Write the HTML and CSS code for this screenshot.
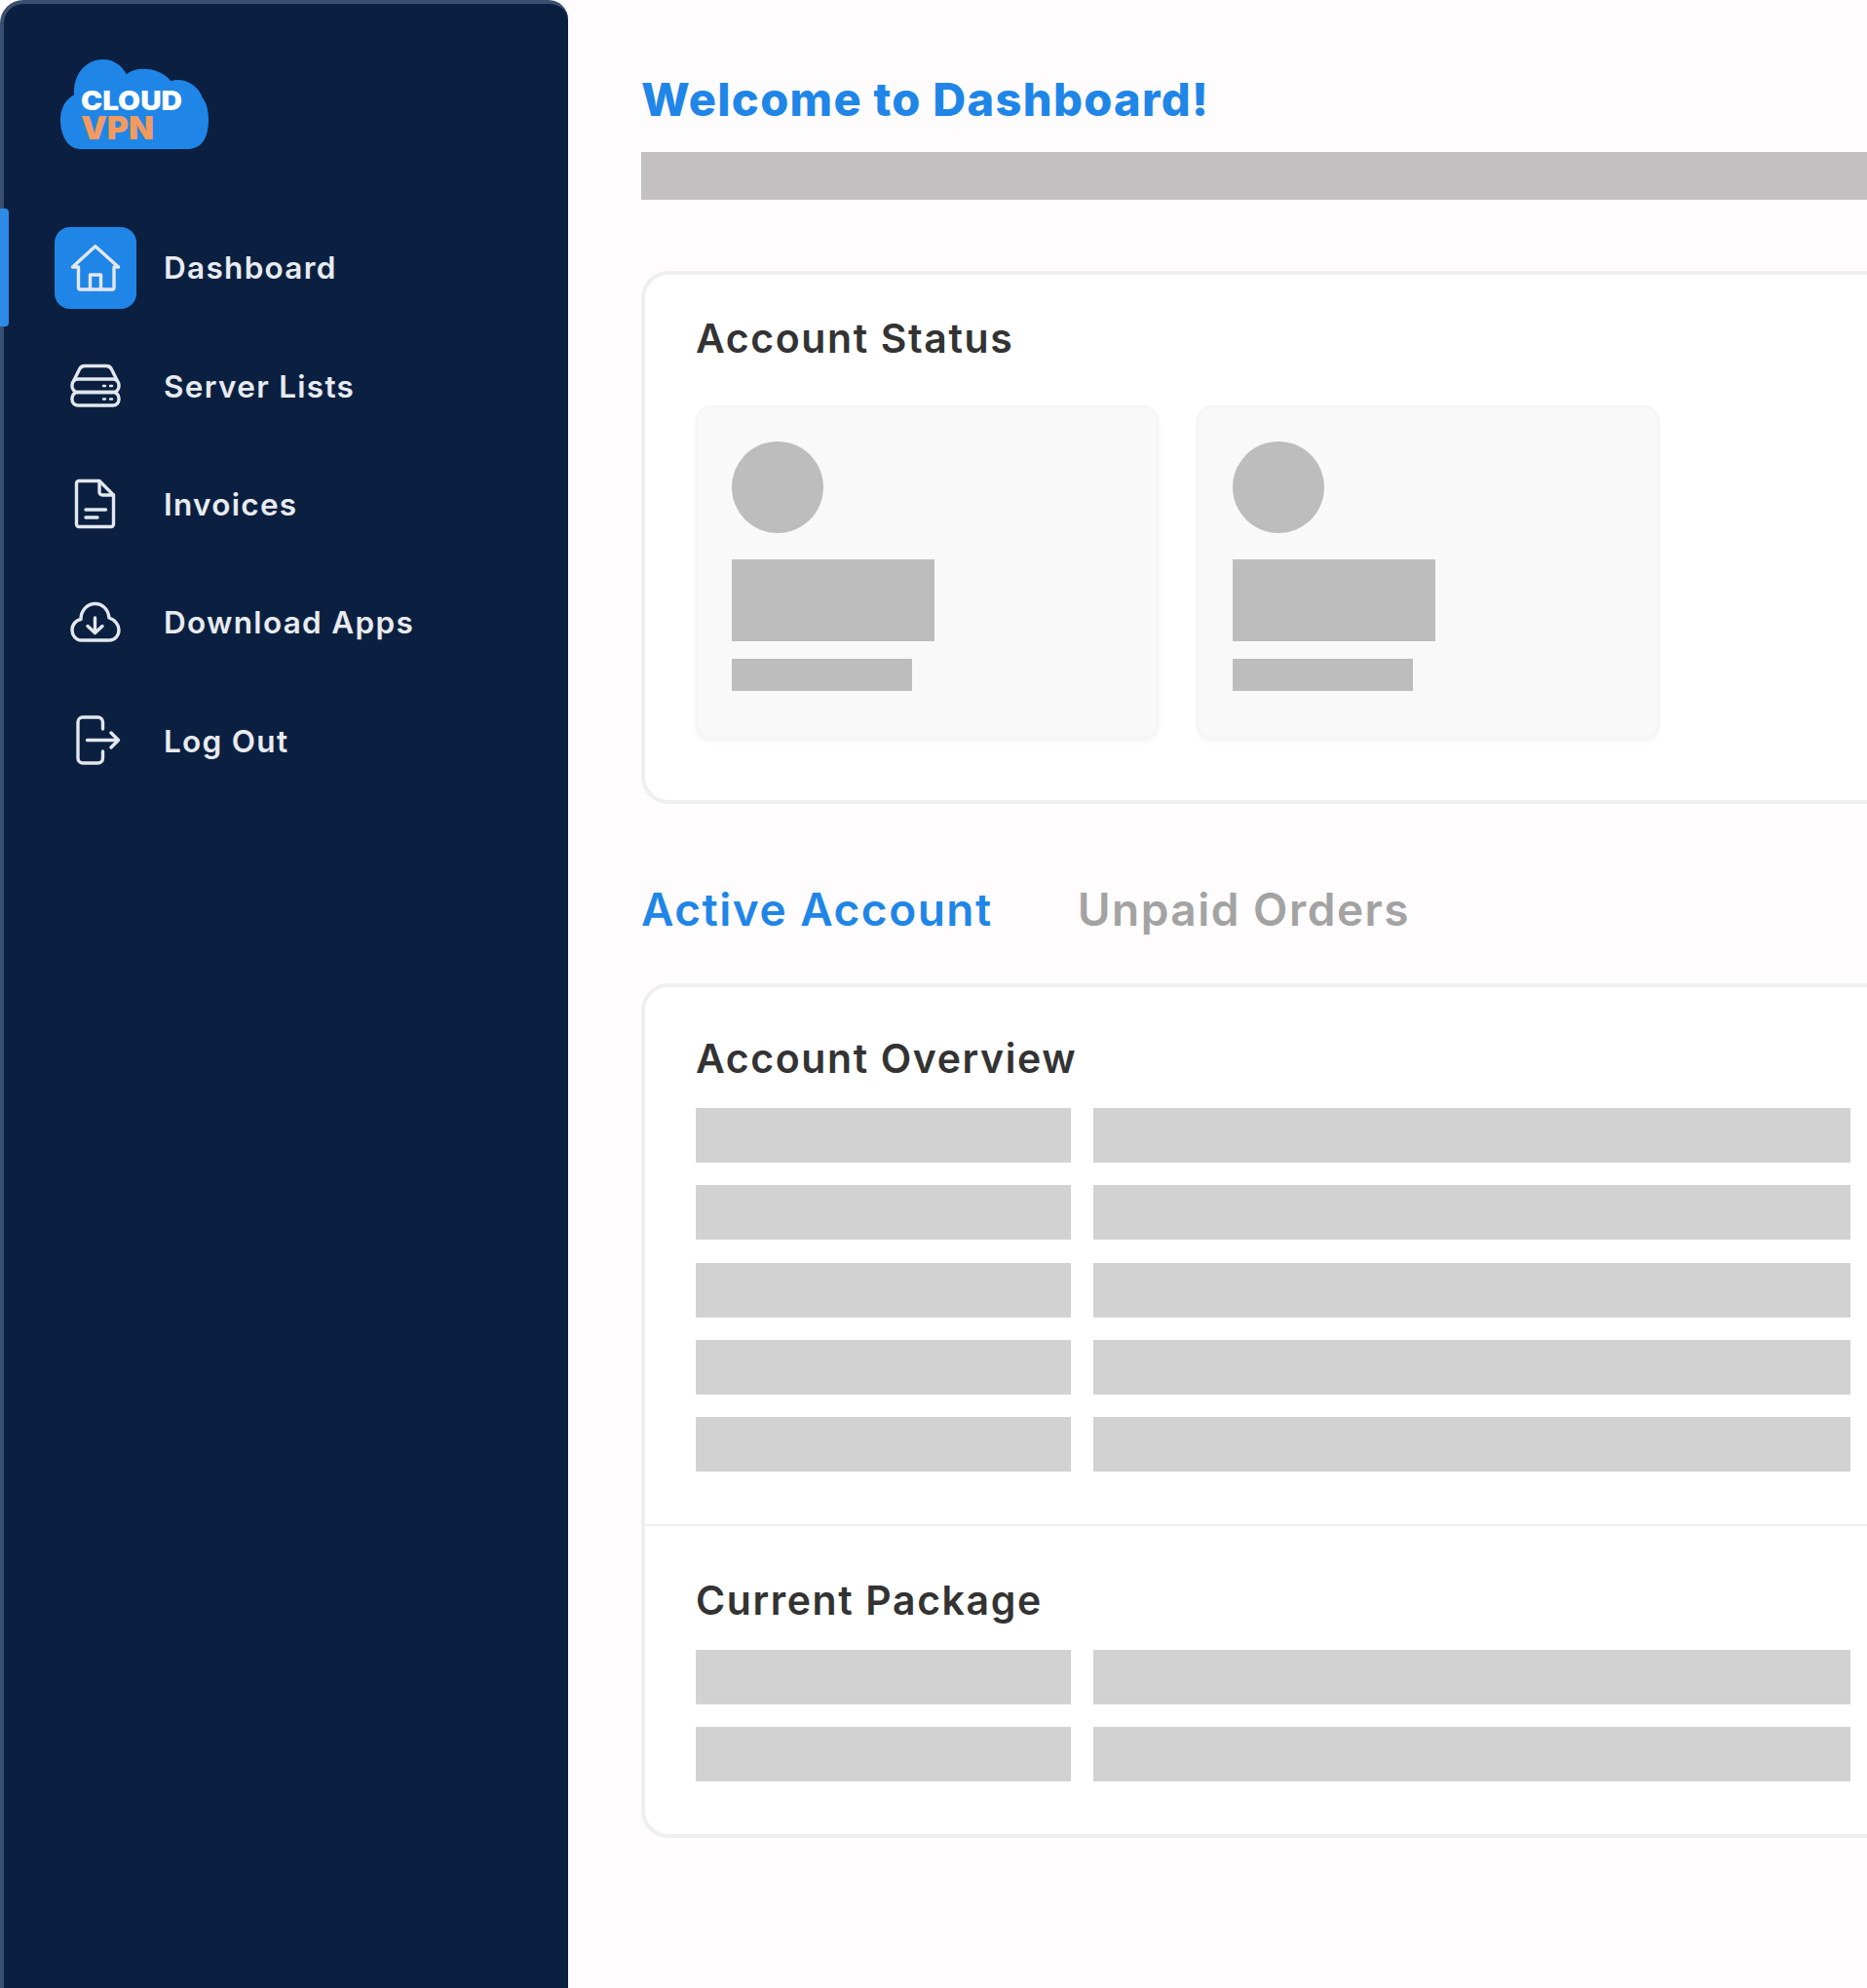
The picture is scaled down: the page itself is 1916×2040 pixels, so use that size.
FILE: index.html
```html
<!DOCTYPE html>
<html lang="en">
<head>
    <meta charset="UTF-8">
    <meta name="viewport" content="width=device-width, initial-scale=1.0">
    <title>Cloud VPN Dashboard</title>
    <link rel="stylesheet" href="styles.css">
</head>
<body>

    <aside class="sidebar">
        <div class="logo">
            <svg width="152" height="92" viewBox="0 0 152 92">
                <path fill="#1f86e8" transform="translate(-1 -1) scale(1.013 1.01)" d="M21 92C8 92 1 78 1 62C1 50 7 41 15 37C13 18 26 1 44 1C55 1 63 7 68 16C74 11 82 10 90 11C100 12 108 17 113 23C125 19 140 26 145 40C149 45 151 53 151 62C151 80 145 92 130 92Z"/>
                <text class="logo-cloud" x="21" y="52" textLength="104" lengthAdjust="spacingAndGlyphs">CLOUD</text>
                <text class="logo-vpn" x="21" y="82" textLength="75" lengthAdjust="spacingAndGlyphs">VPN</text>
            </svg>
        </div>

        <nav class="nav">
            <a class="nav-item active">
                <span class="nav-icon">
                    <svg width="52" height="52" viewBox="0 0 52 52">
                        <path d="M2.500 25L25.800 3.700L49.500 25H45V46a2 2 0 0 1-2 2H10.500a2 2 0 0 1-2-2V25Z"/>
                        <path d="M20.500 48V33H31.500V48"/>
                    </svg>
                </span>
                Dashboard
            </a>
            <a class="nav-item">
                <span class="nav-icon">
                    <svg width="52" height="52" viewBox="0 0 52 52">
                        <path d="M4 20L9.500 9a6 6 0 0 1 5.500-3.500H37a6 6 0 0 1 5.500 3.500L48 20"/>
                        <rect x="2" y="19" width="48" height="13.500" rx="6"/>
                        <rect x="2" y="32.500" width="48" height="13.500" rx="6"/>
                        <path class="dots" d="M34 26H36M41 26H43M34 39.500H36M41 39.500H43"/>
                    </svg>
                </span>
                Server Lists
            </a>
            <a class="nav-item">
                <span class="nav-icon">
                    <svg width="52" height="52" viewBox="0 0 52 52">
                        <path d="M9 2.500H30L44.500 17V47a2.500 2.500 0 0 1-2.500 2.500H9A2.500 2.500 0 0 1 6.500 47V5A2.500 2.500 0 0 1 9 2.500Z"/>
                        <path d="M30 3V14a3 3 0 0 0 3 3H44"/>
                        <path d="M16 32H36.500M16 40H28"/>
                    </svg>
                </span>
                Invoices
            </a>
            <a class="nav-item">
                <span class="nav-icon">
                    <svg width="52" height="52" viewBox="0 0 52 52">
                        <path d="M12 44C5 44 2 38 2 33.500C2 27 7 23 11 22.500C11 13 18 6.500 25.500 6.500C33 6.500 39 12 40 21C46 23 50 28 50 33.500C50 39 46 44 40 44Z"/>
                        <path d="M25.500 21V36M18 29.500L25.500 36.500L33 29.500"/>
                    </svg>
                </span>
                Download Apps
            </a>
            <a class="nav-item">
                <span class="nav-icon">
                    <svg width="52" height="52" viewBox="0 0 52 52">
                        <path d="M33.500 14V7a5 5 0 0 0-5-5H13a5 5 0 0 0-5 5V44a5 5 0 0 0 5 5H28.500a5 5 0 0 0 5-5V37"/>
                        <path d="M17.500 25.500H49M42 18L49.500 25.500L42 33"/>
                    </svg>
                </span>
                Log Out
            </a>
        </nav>
    </aside>

    <main class="main">
        <h1 class="welcome">Welcome to Dashboard!</h1>
        <div class="top-bar"></div>

        <section class="card status-card">
            <h2 class="card-title">Account Status</h2>
            <div class="status-list">
                <div class="status-box">
                    <div class="ph-circle"></div>
                    <div class="ph-big"></div>
                    <div class="ph-small"></div>
                </div>
                <div class="status-box">
                    <div class="ph-circle"></div>
                    <div class="ph-big"></div>
                    <div class="ph-small"></div>
                </div>
            </div>
        </section>

        <div class="tabs">
            <span class="tab active">Active Account</span>
            <span class="tab">Unpaid Orders</span>
        </div>

        <section class="card details-card">
            <div class="details-section overview">
                <h2 class="card-title">Account Overview</h2>
                <div class="ph-rows">
                    <div class="ph-cell"></div><div class="ph-cell"></div>
                    <div class="ph-cell"></div><div class="ph-cell"></div>
                    <div class="ph-cell"></div><div class="ph-cell"></div>
                    <div class="ph-cell"></div><div class="ph-cell"></div>
                    <div class="ph-cell"></div><div class="ph-cell"></div>
                </div>
            </div>
            <div class="details-section package">
                <h2 class="card-title">Current Package</h2>
                <div class="ph-rows">
                    <div class="ph-cell"></div><div class="ph-cell"></div>
                    <div class="ph-cell"></div><div class="ph-cell"></div>
                </div>
            </div>
        </section>
    </main>

</body>
</html>
```
FILE: styles.css
```css
* {
    box-sizing: border-box;
}

body {
    font-family: 'Inter', 'Liberation Sans', sans-serif;
    background-color: #fefcfd;
    display: flex;
    height: 2040px;
    margin: 0;
    overflow: hidden;
}

/* sidebar */
.sidebar {
    width: 583px;
    flex-shrink: 0;
    background-color: #0b2040;
    border-top: 4px solid #3a5070;
    border-left: 4px solid #3a5070;
    border-radius: 24px 20px 0 0;
    padding-top: 57px;
}

.logo {
    height: 92px;
    margin: 0 0 61px 58px;
}

.logo-cloud {
    font-size: 27px;
    font-weight: 900;
    fill: #ffffff;
}

.logo-vpn {
    font-size: 33px;
    font-weight: 900;
    fill: #f39a5e;
}

.nav-item {
    position: relative;
    display: flex;
    align-items: center;
    gap: 28px;
    height: 121.4px;
    padding-left: 52px;
    font-size: 31.5px;
    font-weight: 600;
    letter-spacing: 1.3px;
    color: #e8ebf0;
}

.nav-item.active::before {
    content: "";
    position: absolute;
    left: -4px;
    top: 0;
    width: 9px;
    height: 100%;
    background-color: #2f8be8;
    border-radius: 0 4px 4px 0;
}

.nav-icon {
    width: 84px;
    height: 84px;
    display: flex;
    align-items: center;
    justify-content: center;
    border-radius: 16px;
}

.nav-item.active .nav-icon {
    background-color: #1f86e8;
}

.nav-icon svg {
    fill: none;
    stroke: #e3e7ee;
    stroke-width: 3.4;
    stroke-linecap: round;
    stroke-linejoin: round;
}

.nav-icon .dots {
    stroke-width: 2.4;
}

/* main */
.main {
    flex: 1;
    min-width: 0;
    padding: 72px 0 0 75px;
}

.welcome {
    width: 1300px;
    margin: 0;
    font-size: 47px;
    line-height: 60px;
    font-weight: 800;
    letter-spacing: 1.3px;
    color: #1f86e8;
}

.top-bar {
    width: 1300px;
    height: 49px;
    margin-top: 24px;
    background-color: #c2c0c1;
}

.card {
    width: 1300px;
    background-color: #ffffff;
    border: 4px solid #f0eff0;
    border-radius: 28px;
}

.status-card {
    height: 547px;
    margin-top: 73px;
    padding: 41px 52px 0;
}

.card-title {
    margin: 0;
    font-size: 41px;
    line-height: 48px;
    font-weight: 600;
    letter-spacing: 1.6px;
    color: #333333;
}

.status-list {
    display: flex;
    gap: 39px;
    margin-top: 45px;
}

.status-box {
    width: 475px;
    height: 342px;
    padding: 35px 35px;
    background-color: #f9f9f9;
    border: 2px solid #f5f5f5;
    border-radius: 16px;
    box-shadow: 0 3px 5px rgba(0, 0, 0, 0.05);
}

.ph-circle {
    width: 94px;
    height: 94px;
    border-radius: 50%;
    background-color: #bdbdbd;
}

.ph-big {
    width: 208px;
    height: 84px;
    margin-top: 27px;
    background-color: #bdbdbd;
}

.ph-small {
    width: 185px;
    height: 33px;
    margin-top: 18px;
    background-color: #bdbdbd;
}

.tabs {
    display: flex;
    gap: 87px;
    margin-top: 78px;
    line-height: 60px;
}

.tab {
    font-size: 46px;
    font-weight: 600;
    letter-spacing: 1.5px;
    color: #a3a3a3;
}

.tab.active {
    color: #1f86e8;
}

.details-card {
    height: 877px;
    margin-top: 46px;
}

.details-section {
    padding: 49px 0 0 52px;
}

.package {
    padding-top: 52px;
}

.overview {
    padding-bottom: 54px;
    border-bottom: 2px solid #f0eff0;
}

.ph-rows {
    display: grid;
    grid-template-columns: 385px 777px;
    grid-auto-rows: 56px;
    gap: 23.3px 23px;
    margin-top: 27px;
}

.ph-cell {
    background-color: #d2d2d2;
}
```
